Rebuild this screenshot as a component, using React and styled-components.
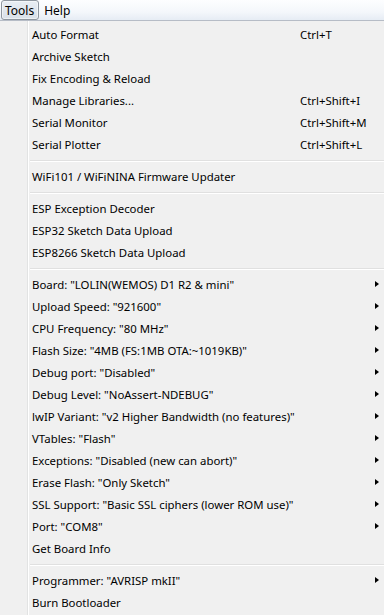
import React from 'react';
import styled, { createGlobalStyle } from 'styled-components';

const GlobalStyle = createGlobalStyle`
	html, body {
		margin: 0;
		padding: 0;
		background: #f0f0f0;
	}
	body {
		font-family: "Noto Sans", "Open Sans", sans-serif;
		font-size: 11.4px;
		color: #000;
	}
`;

const groups = [
	[
		{ label: 'Auto Format', shortcut: 'Ctrl+T' },
		{ label: 'Archive Sketch' },
		{ label: 'Fix Encoding & Reload' },
		{ label: 'Manage Libraries...', shortcut: 'Ctrl+Shift+I' },
		{ label: 'Serial Monitor', shortcut: 'Ctrl+Shift+M' },
		{ label: 'Serial Plotter', shortcut: 'Ctrl+Shift+L' }
	],
	[{ label: 'WiFi101 / WiFiNINA Firmware Updater' }],
	[
		{ label: 'ESP Exception Decoder' },
		{ label: 'ESP32 Sketch Data Upload' },
		{ label: 'ESP8266 Sketch Data Upload' }
	],
	[
		{ label: 'Board: "LOLIN(WEMOS) D1 R2 & mini"', sub: true },
		{ label: 'Upload Speed: "921600"', sub: true },
		{ label: 'CPU Frequency: "80 MHz"', sub: true },
		{ label: 'Flash Size: "4MB (FS:1MB OTA:~1019KB)"', sub: true },
		{ label: 'Debug port: "Disabled"', sub: true },
		{ label: 'Debug Level: "NoAssert-NDEBUG"', sub: true },
		{ label: 'lwIP Variant: "v2 Higher Bandwidth (no features)"', sub: true },
		{ label: 'VTables: "Flash"', sub: true },
		{ label: 'Exceptions: "Disabled (new can abort)"', sub: true },
		{ label: 'Erase Flash: "Only Sketch"', sub: true },
		{ label: 'SSL Support: "Basic SSL ciphers (lower ROM use)"', sub: true },
		{ label: 'Port: "COM8"', sub: true },
		{ label: 'Get Board Info' }
	],
	[
		{ label: 'Programmer: "AVRISP mkII"', sub: true },
		{ label: 'Burn Bootloader' }
	]
];

const App = () => (
	<Page>
		<GlobalStyle />
		<MenuBar>
			<MenuTitle active>Tools</MenuTitle>
			<MenuTitle>Help</MenuTitle>
		</MenuBar>
		<Dropdown>
			{groups.map((group, gi) => (
				<React.Fragment key={gi}>
					{gi > 0 && <Separator />}
					{group.map(item => (
						<Item key={item.label}>
							<Label>{item.label}</Label>
							{item.shortcut && <Shortcut>{item.shortcut}</Shortcut>}
							{item.sub && <Arrow />}
						</Item>
					))}
				</React.Fragment>
			))}
		</Dropdown>
	</Page>
);

export default App;

const Page = styled.div`
	width: 384px;
	height: 615px;
	overflow: hidden;
	display: flex;
	flex-direction: column;
`;

const MenuBar = styled.div`
	height: 20px;
	display: flex;
	align-items: stretch;
	padding-left: 1px;
	font-size: 12px;
	background: linear-gradient(#fdfeff, #f4f7fb 60%, #e6ecf4);
	border-bottom: 1px solid #b6bcc6;
`;

const MenuTitle = styled.div`
	display: flex;
	align-items: center;
	padding: 0 4px 0 3px;
	margin-right: 1px;
	border: 1px solid transparent;
	border-radius: 3px;
	${props =>
		props.active &&
		`
		background: linear-gradient(#e8edf3, #d9e0e8);
		border-color: #8e969f;
		box-shadow: inset 0 0 0 1px rgba(255,255,255,0.5);
	`}
`;

const Dropdown = styled.div`
	flex: 1;
	position: relative;
	padding-top: 2px;
	background: #f0f0f0;

	&::before {
		content: '';
		position: absolute;
		left: 27px;
		top: 0;
		bottom: 0;
		width: 1px;
		background: #e2e3e3;
		box-shadow: 1px 0 0 #ffffff;
	}
`;

const Item = styled.div`
	height: 22px;
	display: flex;
	align-items: center;
	padding-left: 32px;
	padding-right: 5px;
	position: relative;
`;

const Label = styled.span`
	flex: 1;
	white-space: nowrap;
`;

const Shortcut = styled.span`
	width: 79px;
	white-space: nowrap;
`;

const Arrow = styled.span`
	width: 0;
	height: 0;
	border-top: 3.5px solid transparent;
	border-bottom: 3.5px solid transparent;
	border-left: 4px solid #000;
`;

const Separator = styled.div`
	height: 10px;
	display: flex;
	align-items: center;
	margin-left: 30px;

	&::after {
		content: '';
		flex: 1;
		height: 1px;
		background: #e0e0e0;
		box-shadow: 0 1px 0 #ffffff;
	}
`;
